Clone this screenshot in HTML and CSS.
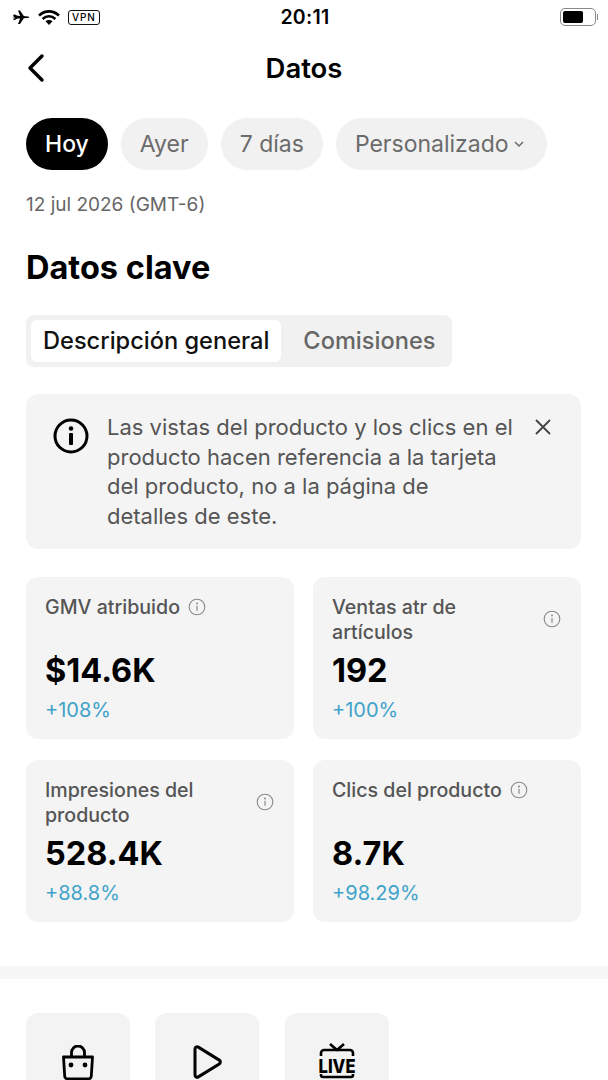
FILE: index.html
```html
<!DOCTYPE html>
<html lang="es">
<head>
<meta charset="utf-8">
<title>Datos</title>
<link rel="stylesheet" href="styles.css">
</head>
<body>
<div class="page">
  <div class="status">
    <div class="status-left">
      <svg class="i-plane" viewBox="0 0 18 16" width="18" height="16"><path d="M1 6.600 3.200 8l-2 .1v.8l2-.1L1 10.200l1 .5 3.600-1.600 2.600-.2L6 14.500h2l3.800-5.700 3.600-.3c1.200-.1 1.800-.4 1.800-.8s-.6-.7-1.800-.8l-3.600-.3L8 1H6l2.200 5.500-2.600-.2L2 4.800z" fill="#000" transform="translate(0 .5)"/></svg>
      <svg class="i-wifi" viewBox="0 0 24 17" width="24" height="17"><path d="M2 6.500C8 1 16 1 22 6.500M5.600 10C9.500 6.500 14.500 6.500 18.400 10" fill="none" stroke="#000" stroke-width="2.600"/><path d="M8.500 12.300C10.500 10.700 13.500 10.700 15.500 12.300L12 16z" fill="#000"/></svg>
      <span class="vpn">VPN</span>
    </div>
    <span class="time">20:11</span>
    <div class="battery-wrap"><div class="battery"><span class="battery-fill"></span></div><span class="battery-nub"></span></div>
  </div>

  <header class="nav">
    <svg class="back" viewBox="0 0 20 30" width="20" height="30"><path d="M16 3 4 15l12 12" fill="none" stroke="#000" stroke-width="3.400" stroke-linecap="round" stroke-linejoin="round"/></svg>
    <h1>Datos</h1>
  </header>

  <div class="pills">
    <span class="pill active">Hoy</span>
    <span class="pill">Ayer</span>
    <span class="pill">7 días</span>
    <span class="pill">Personalizado<svg class="chev" viewBox="0 0 10 6" width="10" height="6"><path d="m1 1 4 4 4-4" fill="none" stroke="#666" stroke-width="1.400"/></svg></span>
  </div>

  <p class="date">12 jul 2026 (GMT-6)</p>
  <h2>Datos clave</h2>

  <div class="tabs">
    <span class="tab on">Descripción general</span>
    <span class="tab">Comisiones</span>
  </div>

  <div class="notice">
    <svg class="notice-i" viewBox="0 0 36 36" width="36" height="36"><circle cx="18" cy="18" r="16" fill="none" stroke="#000" stroke-width="3"/><circle cx="18" cy="10.500" r="2.300" fill="#000"/><rect x="16" y="15" width="4" height="12" rx="1" fill="#000"/></svg>
    <p>Las vistas del producto y los clics en el producto hacen referencia a la tarjeta del producto, no a la página de detalles de este.</p>
    <svg class="close" viewBox="0 0 18 18" width="18" height="18"><path d="m2 2 14 14M16 2 2 16" stroke="#444" stroke-width="1.800" fill="none"/></svg>
  </div>

  <div class="grid">
    <div class="card">
      <div class="label"><span>GMV atribuido</span><svg class="tip" viewBox="0 0 18 18" width="18" height="18"><use href="#tip"/></svg></div>
      <div class="value">$14.6K</div>
      <div class="delta">+108%</div>
    </div>
    <div class="card">
      <div class="label between"><span>Ventas atr de artículos</span><svg class="tip" viewBox="0 0 18 18" width="18" height="18"><use href="#tip"/></svg></div>
      <div class="value">192</div>
      <div class="delta">+100%</div>
    </div>
    <div class="card">
      <div class="label between"><span>Impresiones del producto</span><svg class="tip" viewBox="0 0 18 18" width="18" height="18"><use href="#tip"/></svg></div>
      <div class="value">528.4K</div>
      <div class="delta">+88.8%</div>
    </div>
    <div class="card">
      <div class="label"><span>Clics del producto</span><svg class="tip" viewBox="0 0 18 18" width="18" height="18"><use href="#tip"/></svg></div>
      <div class="value">8.7K</div>
      <div class="delta">+98.29%</div>
    </div>
  </div>

  <div class="divider"></div>

  <div class="tiles">
    <div class="tile">
      <svg viewBox="0 0 36 36" width="36" height="36"><path d="M11.500 11V7.500a6.500 6.500 0 0 1 13 0V11" fill="none" stroke="#000" stroke-width="2.800"/><path d="M3.500 12h29l-1.200 19a3 3 0 0 1-3 3H7.700a3 3 0 0 1-3-3z" fill="none" stroke="#000" stroke-width="2.800" stroke-linejoin="round"/><circle cx="11" cy="20" r="2.400"/><circle cx="25" cy="20" r="2.400"/></svg>
    </div>
    <div class="tile">
      <svg viewBox="0 0 34 36" width="34" height="36"><path d="M5 4c0-1.800 1.800-2.800 3.300-1.900l21 13c1.400.9 1.400 2.900 0 3.800l-21 13C6.800 32.800 5 31.800 5 30z" fill="none" stroke="#000" stroke-width="3" stroke-linejoin="round"/></svg>
    </div>
    <div class="tile tile-live">
      <svg class="tv" viewBox="0 0 40 37" width="40" height="37"><path d="m13 1 7 6 7-6M4 13v-3a3 3 0 0 1 3-3h26a3 3 0 0 1 3 3v3M4 31v1a2 2 0 0 0 2 2h28a2 2 0 0 0 2-2v-1" fill="none" stroke="#000" stroke-width="2.600"/><text class="tv-text" x="20" y="30" text-anchor="middle" textLength="37" lengthAdjust="spacingAndGlyphs">LIVE</text></svg>
    </div>
  </div>
</div>

<svg class="defs" width="0" height="0"><defs><g id="tip"><circle cx="9" cy="9" r="7.800" fill="none" stroke="#8a8a8a" stroke-width="1.100"/><circle cx="9" cy="5.600" r="1" fill="#8a8a8a"/><rect x="8.400" y="7.800" width="1.200" height="5" fill="#8a8a8a"/></g></defs></svg>
</body>
</html>
```
FILE: styles.css
```css
* { box-sizing: border-box; }
html, body { margin: 0; padding: 0; background: #fff; }
body { width: 608px; height: 1080px; overflow: hidden; font-family: Inter, "Liberation Sans", sans-serif; color: #000; }
.page { display: flex; flex-direction: column; height: 1080px; overflow: hidden; }
.page > * { flex: none; }
.defs { position: absolute; }

.status { height: 34px; display: grid; grid-template-columns: 1fr auto 1fr; align-items: center; padding: 0 10px 0 12px; }
.status-left { display: flex; align-items: center; gap: 7px; }
.vpn { font-size: 10px; line-height: 13px; font-weight: 500; letter-spacing: .9px; border: 1.300px solid #111; border-radius: 3px; padding: 0 3px; }
.time { font-size: 19.500px; font-weight: 600; letter-spacing: .3px; }
.battery-wrap { justify-self: end; display: flex; align-items: center; gap: 1px; }
.battery { width: 36px; height: 18px; border: 1.500px solid #888; border-radius: 5px; padding: 2px; }
.battery-fill { display: block; width: 20px; height: 100%; background: #000; border-radius: 2px; }
.battery-nub { width: 1px; height: 6px; background: #888; }

.nav { position: relative; height: 68px; display: flex; align-items: center; justify-content: center; }
.nav h1 { margin: 0; font-size: 27.500px; font-weight: 600; }
.back { position: absolute; left: 26px; top: 19px; }

.pills { display: flex; gap: 13px; padding: 16px 26px 0; }
.pill { height: 52px; padding: 0 19px; border-radius: 26px; background: #f1f1f1; color: #6b6b6b; font-size: 23px; display: flex; align-items: center; gap: 5px; }
.pill.active { background: #000; color: #fff; font-weight: 500; }
.pill .chev { margin-right: 4px; }

.date { margin: 23px 26px 0; font-size: 19px; line-height: 24px; color: #666; }
h2 { margin: 31px 26px 0; font-size: 32.500px; line-height: 40px; font-weight: 700; }

.tabs { margin: 27px 26px 0; align-self: flex-start; display: flex; gap: 10px; background: #f1f1f1; border-radius: 8px; padding: 5px; height: 52px; }
.tab { padding: 0 12px 2px; font-size: 23.600px; color: #666; display: flex; align-items: center; font-weight: 500; }
.tab.on { background: #fff; color: #111; border-radius: 6px; }

.notice { margin: 27px 27px 0 26px; height: 155px; background: #f4f4f4; border-radius: 12px; padding: 19px 0 0 27px; display: flex; align-items: flex-start; }
.notice-i { flex: none; margin-top: 5px; }
.notice p { margin: 0 0 0 18px; width: 408px; flex: none; font-size: 22px; line-height: 29.600px; color: #555; }
.close { flex: none; margin: 5px 0 0 19px; }

.grid { margin: 28px 26px 0; display: grid; grid-template-columns: 268px 268px; gap: 21px 19px; }
.card { height: 162px; background: #f4f4f4; border-radius: 12px; padding: 18px 20px 0 19px; display: flex; flex-direction: column; }
.label { height: 50px; display: flex; align-items: flex-start; gap: 8px; font-size: 19.600px; line-height: 25px; font-weight: 500; color: #555; }
.label .tip { margin-top: 3px; flex: none; }
.label.between { justify-content: space-between; align-items: center; }
.label.between .tip { margin-top: -2px; }
.value { margin-top: 4px; font-size: 32.500px; line-height: 44px; font-weight: 700; color: #000; }
.delta { margin-top: 4px; font-size: 20px; line-height: 26px; color: #3fa3c9; }

.divider { margin-top: 44px; height: 13px; background: #f7f7f7; }

.tiles { margin: 34px 26px 0; display: flex; gap: 25.300px; }
.tile { flex: none; width: 104px; height: 120px; background: #f3f3f3; border-radius: 12px; display: flex; justify-content: center; padding-top: 32px; }
.tile-live { padding-top: 30px; }
.tv-text { font-family: Inter, "Liberation Sans", sans-serif; font-size: 19px; font-weight: 800; fill: #000; }
```
